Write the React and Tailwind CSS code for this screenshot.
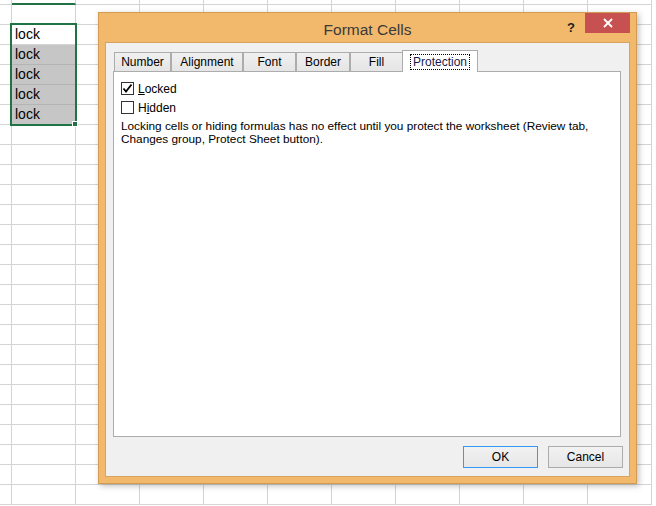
import React from 'react';

const ui = { fontFamily: '"Liberation Sans", Arial, sans-serif' };

function Sheet() {
    const rows = Array.from({ length: 26 });
    const cols = Array.from({ length: 11 });
    return (
        <div className="flex flex-col" style={ui}>
            {rows.map((_, r) => (
                <div key={r} className={`flex shrink-0 ${r === 0 ? 'h-[5px]' : 'h-[20px]'}`}>
                    {cols.map((_, c) => {
                        const isLock = c === 1 && r >= 2 && r <= 6;
                        const gray = c === 1 && r >= 3 && r <= 6;
                        const head = r === 0 && c === 1;
                        return (
                            <div
                                key={c}
                                className={`shrink-0 border-r border-[#d4d4d4] ${c === 0 ? 'w-[12px]' : 'w-[64px]'} ${head ? 'border-b-2 border-b-[#217346]' : 'border-b'} ${gray ? 'bg-[#c6c6c6] border-b-[#b4b4b4]' : ''}`}
                            >
                                {isLock && (
                                    <span className="block pl-[3px] text-[14px] leading-[19px] text-black">lock</span>
                                )}
                            </div>
                        );
                    })}
                </div>
            ))}
        </div>
    );
}

function Tab({ label, selected, w }) {
    if (selected) {
        return (
            <div className={`-ml-px relative z-10 -mb-px h-[22px] ${w} flex items-center justify-center border border-b-0 border-[#acacac] bg-white`}>
                <span className="px-[2px] leading-[14px] border border-dotted border-black text-[12px] text-[#1a1a4a]">{label}</span>
            </div>
        );
    }
    return (
        <div className={`self-end h-[19px] ${w} flex items-center justify-center border border-b-0 border-[#acacac] bg-gradient-to-b from-[#f0f0f0] to-[#e5e5e5] text-[12px] text-black`}>
            {label}
        </div>
    );
}

function Check({ checked }) {
    return (
        <div className="w-[13px] h-[13px] border border-[#333] bg-white flex items-center justify-center">
            {checked && (
                <svg width="11" height="11" viewBox="0 0 11 11">
                    <path d="M1.5 5.5 L4 8.5 L9.5 1.5" fill="none" stroke="#000" strokeWidth="1.8" />
                </svg>
            )}
        </div>
    );
}

function Dialog() {
    return (
        <div
            className="absolute left-[98px] top-[12px] w-[539px] h-[472px] border border-[#d39a52] bg-[#f2b86b] flex flex-col shadow-[2px_2px_6px_rgba(0,0,0,0.25)]"
            style={ui}
        >
            <div className="h-[29px] shrink-0 grid grid-cols-[1fr_auto_1fr]">
                <div />
                <div className="pt-[5px] text-[15.5px] text-[#3a3a3a]">Format Cells</div>
                <div className="flex justify-end items-start pr-[6px]">
                    <span className="mt-[5px] mr-[10px] text-[13px] font-bold text-[#222]">?</span>
                    <div className="w-[45px] h-[20px] bg-[#c75050] flex items-center justify-center">
                        <svg width="10" height="10" viewBox="0 0 10 10">
                            <path d="M1 1 L9 9 M9 1 L1 9" stroke="#fff" strokeWidth="1.8" />
                        </svg>
                    </div>
                </div>
            </div>
            <div className="mx-[6px] h-[435px] shrink-0 border border-[#d6a360] bg-[#f0f0f0] pt-[7px] pl-[7px] pr-[8px] pb-[8px] flex flex-col">
                <div className="flex h-[21px] pl-px">
                    <Tab label="Number" w="w-[57px]" />
                    <Tab label="Alignment" w="w-[72px]" />
                    <Tab label="Font" w="w-[53px]" />
                    <Tab label="Border" w="w-[54px]" />
                    <Tab label="Fill" w="w-[53px]" />
                    <Tab label="Protection" w="w-[76px]" selected />
                </div>
                <div className="h-[366px] border border-[#acacac] bg-white pt-[10px] pl-[7px] text-[12px] text-black">
                    <div className="flex items-center gap-[4px] h-[13px]">
                        <Check checked />
                        <span><span className="underline">L</span>ocked</span>
                    </div>
                    <div className="flex items-center gap-[4px] h-[13px] mt-[6px]">
                        <Check />
                        <span>H<span className="underline">i</span>dden</span>
                    </div>
                    <p className="mt-[6px] leading-[13px] text-[11.8px]">
                        Locking cells or hiding formulas has no effect until you protect the worksheet (Review tab,
                        <br />
                        Changes group, Protect Sheet button).
                    </p>
                </div>
                <div className="mt-[9px] -mr-[2px] flex justify-end gap-[10px]">
                    <button className="w-[75px] h-[22px] border border-[#3399ff] bg-gradient-to-b from-[#f2f2f2] to-[#e6e6e6] text-[12px] text-black">OK</button>
                    <button className="w-[75px] h-[22px] border border-[#acacac] bg-gradient-to-b from-[#f2f2f2] to-[#e6e6e6] text-[12px] text-black">Cancel</button>
                </div>
            </div>
        </div>
    );
}

export default function App() {
    return (
        <div className="relative w-[656px] h-[506px] overflow-hidden bg-white">
            <Sheet />
            <div className="absolute left-[10px] top-[23px] w-[67px] h-[103px] border-2 border-[#217346]" />
            <div className="absolute left-[72px] top-[121px] w-[6px] h-[6px] bg-[#217346] border border-white" />
            <Dialog />
        </div>
    );
}
